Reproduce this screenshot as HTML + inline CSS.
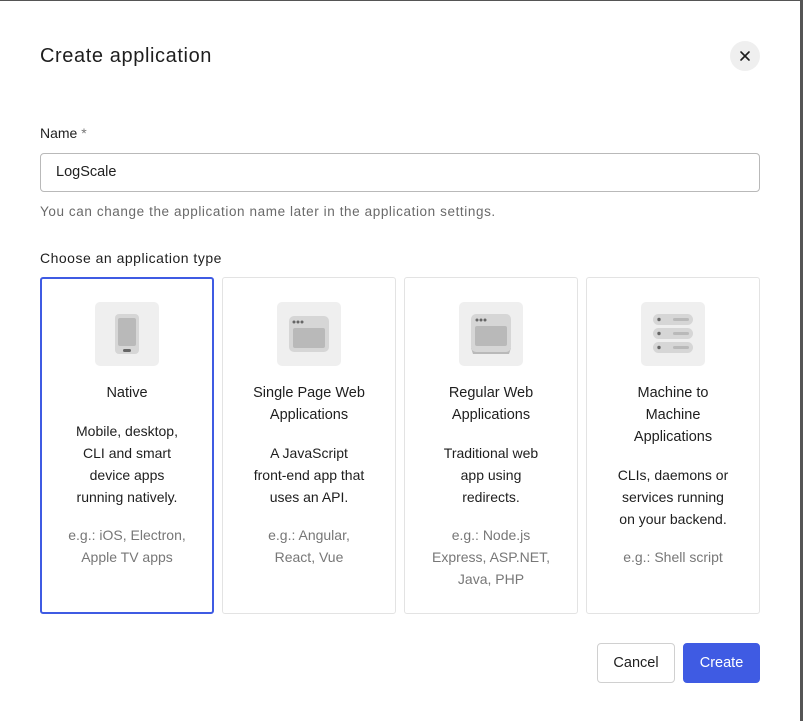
<!DOCTYPE html>
<html><head><style>
*{box-sizing:border-box;margin:0;padding:0}
body{width:803px;height:721px;background:#fff;font-family:"Liberation Sans",sans-serif;color:#1e1e1e;position:relative;overflow:hidden}
.frame{position:absolute;right:0;top:0;width:3px;height:721px;background:#555}
.top{position:absolute;left:0;top:0;width:803px;height:1px;background:#555}
h1{position:absolute;left:40px;top:45px;font-size:20px;letter-spacing:0.6px;font-weight:normal;color:#1e1e1e}
.close{position:absolute;left:730px;top:41px;width:30px;height:30px;border-radius:50%;background:#efefef}
.lbl{position:absolute;left:40px;font-size:14px}
.input{position:absolute;left:40px;top:153px;width:720px;height:39px;border:1px solid #b9b9b9;border-radius:4px;padding-left:15px;line-height:37px;font-size:14.5px}
.help{position:absolute;left:40px;top:204px;font-size:13.5px;letter-spacing:0.6px;color:#6a6a6a}
.card{position:absolute;top:277px;width:174px;height:337px;border:1px solid #e3e3e3;border-radius:3px;text-align:center;padding-top:24px}
.card.sel{border:2px solid #3f5be3;padding-top:23px}
.ic{width:64px;height:64px;background:#efefef;border-radius:5px;margin:0 auto;position:relative}
.t{margin-top:16px;font-size:14.5px;line-height:22px}
.d{margin-top:16px;font-size:14px;line-height:22px}
.e{margin-top:16px;font-size:14px;line-height:22px;color:#777}
.btn{position:absolute;top:643px;height:40px;border-radius:4px;font-size:14.5px;line-height:38px;text-align:center}
</style></head><body>
<div class="top"></div><div class="frame"></div>
<h1>Create application</h1>
<div class="close"><svg width="30" height="30"><path d="M11 11L19 19M19 11L11 19" stroke="#1e1e1e" stroke-width="1.6" stroke-linecap="round"/></svg></div>
<div class="lbl" style="top:125px">Name <span style="color:#777">*</span></div>
<div class="input">LogScale</div>
<div class="help">You can change the application name later in the application settings.</div>
<div class="lbl" style="top:250px;letter-spacing:0.5px">Choose an application type</div>

<div class="card sel" style="left:40px">
<div class="ic"><svg width="64" height="64"><rect x="20" y="12" width="24" height="40" rx="4" fill="#d6d6d6"/><rect x="23" y="16" width="18" height="28" rx="2" fill="#b9b9b9"/><rect x="28" y="47" width="8" height="3" rx="1.5" fill="#666"/></svg></div>
<div class="t">Native</div>
<div class="d">Mobile, desktop,<br>CLI and smart<br>device apps<br>running natively.</div>
<div class="e">e.g.: iOS, Electron,<br>Apple TV apps</div>
</div>
<div class="card" style="left:222px">
<div class="ic"><svg width="64" height="64"><rect x="12" y="14" width="40" height="36" rx="5" fill="#d6d6d6"/><rect x="16" y="26" width="32" height="20" rx="2" fill="#b9b9b9"/><circle cx="17" cy="20" r="1.5" fill="#666"/><circle cx="21" cy="20" r="1.5" fill="#666"/><circle cx="25" cy="20" r="1.5" fill="#666"/></svg></div>
<div class="t">Single Page Web<br>Applications</div>
<div class="d">A JavaScript<br>front-end app that<br>uses an API.</div>
<div class="e">e.g.: Angular,<br>React, Vue</div>
</div>
<div class="card" style="left:404px">
<div class="ic"><svg width="64" height="64"><path d="M12 46 L14 52 H50 L52 46Z" fill="#b9b9b9"/><rect x="12" y="12" width="40" height="38" rx="5" fill="#d6d6d6"/><rect x="16" y="24" width="32" height="20" rx="2" fill="#b9b9b9"/><circle cx="18" cy="18" r="1.5" fill="#666"/><circle cx="22" cy="18" r="1.5" fill="#666"/><circle cx="26" cy="18" r="1.5" fill="#666"/></svg></div>
<div class="t">Regular Web<br>Applications</div>
<div class="d">Traditional web<br>app using<br>redirects.</div>
<div class="e">e.g.: Node.js<br>Express, ASP.NET,<br>Java, PHP</div>
</div>
<div class="card" style="left:586px">
<div class="ic"><svg width="64" height="64"><g fill="#d6d6d6"><rect x="12" y="12" width="40" height="11" rx="5.5"/><rect x="12" y="26" width="40" height="11" rx="5.5"/><rect x="12" y="40" width="40" height="11" rx="5.5"/></g><g fill="#666"><circle cx="18" cy="17.5" r="1.7"/><circle cx="18" cy="31.5" r="1.7"/><circle cx="18" cy="45.5" r="1.7"/></g><g fill="#b9b9b9"><rect x="32" y="16" width="16" height="3" rx="1.5"/><rect x="32" y="30" width="16" height="3" rx="1.5"/><rect x="32" y="44" width="16" height="3" rx="1.5"/></g></svg></div>
<div class="t">Machine to<br>Machine<br>Applications</div>
<div class="d">CLIs, daemons or<br>services running<br>on your backend.</div>
<div class="e">e.g.: Shell script</div>
</div>

<div class="btn" style="left:597px;width:78px;border:1px solid #d0d0d0;background:#fff">Cancel</div>
<div class="btn" style="left:683px;width:77px;background:#3f5be3;color:#fff;border:1px solid #3f5be3">Create</div>
</body></html>
